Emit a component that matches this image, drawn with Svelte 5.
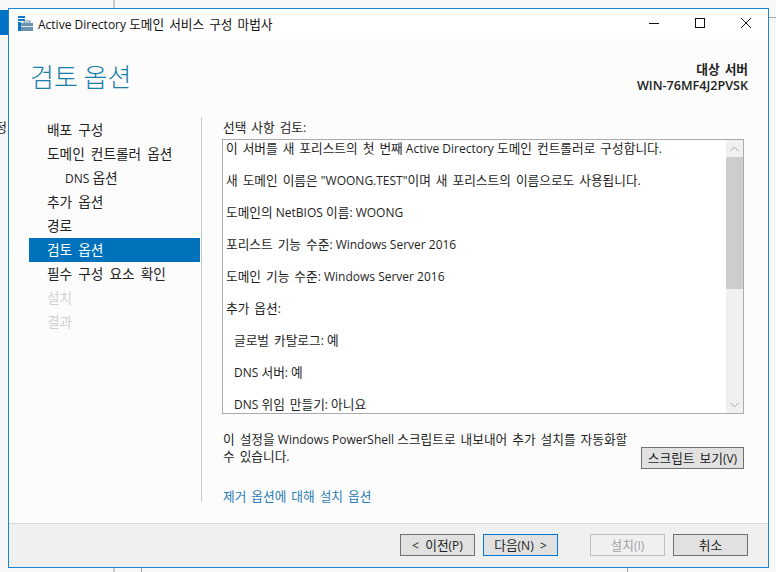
<script>
	const steps = [
		{ label: '배포 구성' },
		{ label: '도메인 컨트롤러 옵션' },
		{ label: 'DNS 옵션', sub: true },
		{ label: '추가 옵션' },
		{ label: '경로' },
		{ label: '검토 옵션', active: true },
		{ label: '필수 구성 요소 확인' },
		{ label: '설치', disabled: true },
		{ label: '결과', disabled: true }
	];

	const review = [
		{ text: '이 서버를 새 포리스트의 첫 번째 Active Directory 도메인 컨트롤러로 구성합니다.' },
		{ text: '새 도메인 이름은 "WOONG.TEST"이며 새 포리스트의 이름으로도 사용됩니다.' },
		{ text: '도메인의 NetBIOS 이름: WOONG' },
		{ text: '포리스트 기능 수준: Windows Server 2016' },
		{ text: '도메인 기능 수준: Windows Server 2016' },
		{ text: '추가 옵션:' },
		{ text: '글로벌 카탈로그: 예', indent: true },
		{ text: 'DNS 서버: 예', indent: true },
		{ text: 'DNS 위임 만들기: 아니요', indent: true }
	];

	// hangul runs are set a size up, the latin font stays at 12px
	const parts = (t) => t.split(/([가-힣][가-힣 ]*[가-힣]|[가-힣])/).filter(Boolean);
	const isKo = (p) => /[가-힣]/.test(p);
</script>

{#snippet mixed(t)}{#each parts(t) as p}<span class:ko={isKo(p)}>{p}</span>{/each}{/snippet}

<div class="desktop">
	<div class="bg-tab"></div>
	<div class="bg-text">정</div>
	<div class="bg-line right"></div>
	<div class="bg-tick t1"></div>
	<div class="bg-tick t2"></div>
	<div class="bg-tick t3"></div>
	<div class="bg-tick t4"></div>

	<div class="window">
		<header class="titlebar">
			<svg class="app-icon" width="16" height="16" viewBox="0 0 16 16">
				<rect x="0" y="0" width="7" height="2" fill="#0f79c9" />
				<rect x="0" y="3" width="7" height="2" fill="#0f79c9" />
				<rect x="0" y="6" width="3" height="9" fill="#0f79c9" />
				<rect x="3" y="7" width="12" height="8" fill="#6b93ad" />
				<rect x="6" y="5" width="6" height="2" fill="none" stroke="#6b93ad" />
				<rect x="3" y="10" width="12" height="1" fill="#dbe6ee" />
			</svg>
			<span class="title">{@render mixed('Active Directory 도메인 서비스 구성 마법사')}</span>
			<div class="controls">
				<svg width="12" height="12" viewBox="0 0 12 12"><path d="M1 5.5h10" stroke="#111" fill="none" /></svg>
				<svg width="12" height="12" viewBox="0 0 12 12"><rect x="1.5" y="0.5" width="9" height="9" stroke="#111" fill="none" /></svg>
				<svg width="12" height="12" viewBox="0 0 12 12"><path d="M1 0l10 10M11 0L1 10" stroke="#111" fill="none" /></svg>
			</div>
		</header>

		<div class="head">
			<h1>검토 옵션</h1>
			<div class="target">
				<div>{@render mixed('대상 서버')}</div>
				<div>WIN-76MF4J2PVSK</div>
			</div>
		</div>

		<div class="main">
			<nav class="steps">
				{#each steps as s}
					<div class="step" class:sub={s.sub} class:active={s.active} class:disabled={s.disabled}>{@render mixed(s.label)}</div>
				{/each}
			</nav>

			<section class="content">
				<div class="field-label">{@render mixed('선택 사항 검토:')}</div>
				<div class="textbox">
					<div class="review">
						{#each review as r}
							<p class:indent={r.indent}>{@render mixed(r.text)}</p>
						{/each}
					</div>
					<div class="scrollbar">
						<div class="arrow">
							<svg width="9" height="6" viewBox="0 0 9 6"><path d="M0.5 5l4-4 4 4" stroke="#a6a6a6" fill="none" /></svg>
						</div>
						<div class="thumb"></div>
						<div class="track"></div>
						<div class="arrow">
							<svg width="9" height="6" viewBox="0 0 9 6"><path d="M0.5 1l4 4 4-4" stroke="#a6a6a6" fill="none" /></svg>
						</div>
					</div>
				</div>

				<div class="export">
					<p>{@render mixed('이 설정을 Windows PowerShell 스크립트로 내보내어 추가 설치를 자동화할 수 있습니다.')}</p>
					<button class="btn script">{@render mixed('스크립트 보기(V)')}</button>
				</div>

				<span class="link">{@render mixed('제거 옵션에 대해 설치 옵션')}</span>
			</section>
		</div>

		<footer class="footer">
			<button class="btn wide">&lt;&nbsp; {@render mixed('이전(P)')}</button>
			<button class="btn wide focus">{@render mixed('다음(N)')}&nbsp; &gt;</button>
			<button class="btn wide off gap" disabled>{@render mixed('설치(I)')}</button>
			<button class="btn wide">{@render mixed('취소')}</button>
		</footer>
	</div>
</div>

<style>
	:global(body) {
		margin: 0;
	}
	.desktop {
		position: relative;
		width: 776px;
		height: 572px;
		overflow: hidden;
		background: #f7f7f7;
		font-family: 'Open Sans', 'Noto Sans CJK KR', sans-serif;
		font-size: 12px;
		color: #1e1e1e;
	}
	.ko {
		font-size: 12.7px;
		line-height: 0;
		word-spacing: 1.7px;
	}
	.step .ko {
		font-size: 13.7px;
		word-spacing: 2.5px;
	}
	.bg-tab {
		position: absolute;
		left: 0;
		top: 10px;
		width: 8px;
		height: 25px;
		background: #0072c6;
	}
	.bg-text {
		position: absolute;
		left: -5px;
		top: 118px;
		font-size: 13px;
		line-height: 18px;
	}
	.bg-line.right {
		position: absolute;
		left: 769px;
		top: 17px;
		width: 7px;
		height: 1px;
		background: #a8a8a8;
	}
	.bg-tick {
		position: absolute;
		width: 1px;
		background: #a0a0a0;
	}
	.t1 { left: 113px; top: 0; height: 8px; background: #c8c8c8; width: 2px; }
	.t2 { left: 113px; top: 568px; height: 4px; background: #c8c8c8; width: 2px; }
	.t3 { left: 141px; top: 568px; height: 4px; }
	.t4 { left: 627px; top: 568px; height: 4px; }

	.window {
		position: absolute;
		left: 8px;
		top: 8px;
		width: 761px;
		height: 560px;
		box-sizing: border-box;
		border: 1px solid #1883d7;
		background: #fcfcfc;
		display: flex;
		flex-direction: column;
	}
	.titlebar {
		height: 30px;
		flex: none;
		background: #fff;
		display: flex;
		align-items: center;
		padding-left: 9px;
	}
	.title {
		margin-left: 4px;
		color: #111;
	}
	.controls {
		margin-left: auto;
		display: flex;
		gap: 34px;
		padding-right: 16px;
	}
	.head {
		height: 78px;
		flex: none;
		box-sizing: border-box;
		display: flex;
		justify-content: space-between;
		padding: 0 20px 0 21px;
	}
	h1 {
		margin: 22px 0 0;
		font-size: 26px;
		font-weight: 300;
		line-height: 32px;
		color: #1a7fa8;
		word-spacing: -1px;
	}
	.target {
		margin-top: 23px;
		text-align: right;
		font-size: 12.6px;
		font-weight: 600;
		line-height: 16px;
		color: #222;
	}
	.main {
		flex: 1;
		display: flex;
		min-height: 0;
	}
	.steps {
		width: 171px;
		margin-left: 20px;
		padding-top: 1px;
		flex: none;
	}
	.step {
		height: 24px;
		line-height: 26px;
		padding-left: 18px;
		color: #222;
	}
	.step.sub {
		padding-left: 36px;
	}
	.step.active {
		background: #0072bc;
		color: #fff;
	}
	.step.disabled {
		color: #d0d0d0;
	}
	.content {
		flex: none;
		width: 544px;
		margin-left: 1px;
		margin-bottom: 21px;
		border-left: 1px solid #c8c8c8;
		box-sizing: border-box;
		padding-left: 20px;
		display: flex;
		flex-direction: column;
		align-items: flex-start;
	}
	.field-label {
		height: 24px;
		line-height: 22px;
		margin-left: 1px;
	}
	.textbox {
		width: 522px;
		height: 275px;
		box-sizing: border-box;
		border: 1px solid #ababab;
		background: #fff;
		display: flex;
	}
	.review {
		flex: 1;
		overflow: hidden;
		padding: 1px 0 0 3px;
	}
	.review p {
		margin: 0 0 16px;
		line-height: 16px;
	}
	.review p.indent {
		padding-left: 8px;
	}
	.scrollbar {
		width: 17px;
		flex: none;
		background: #f0f0f0;
		display: flex;
		flex-direction: column;
	}
	.arrow {
		height: 17px;
		display: flex;
		align-items: center;
		justify-content: center;
	}
	.thumb {
		height: 132px;
		background: #cdcdcd;
	}
	.track {
		flex: 1;
	}
	.export {
		width: 522px;
		display: flex;
		justify-content: space-between;
		align-items: flex-end;
		margin-top: 17px;
	}
	.export p {
		margin: 0;
		width: 412px;
		line-height: 17px;
		margin-left: 1px;
	}
	.btn {
		font: inherit;
		height: 22px;
		padding: 0;
		box-sizing: border-box;
		border: 1px solid #707070;
		background: #e1e1e1;
		color: #1e1e1e;
	}
	.btn.script {
		width: 103px;
		margin-bottom: -4px;
	}
	.link {
		margin-top: 23px;
		margin-left: 1px;
		color: #2a7db5;
	}
	.footer {
		height: 44px;
		flex: none;
		box-sizing: border-box;
		border-top: 1px solid #d9d9d9;
		background: #f0f0f0;
		display: flex;
		align-items: flex-start;
		padding: 10px 0 0 391px;
		gap: 8px;
	}
	.btn.wide {
		width: 75px;
	}
	.btn.focus {
		border-color: #0078d7;
	}
	.btn.off {
		background: #f0f0f0;
		border-color: #bfbfbf;
		color: #a0a0a0;
	}
	.btn.gap {
		margin-left: 24px;
	}
</style>
